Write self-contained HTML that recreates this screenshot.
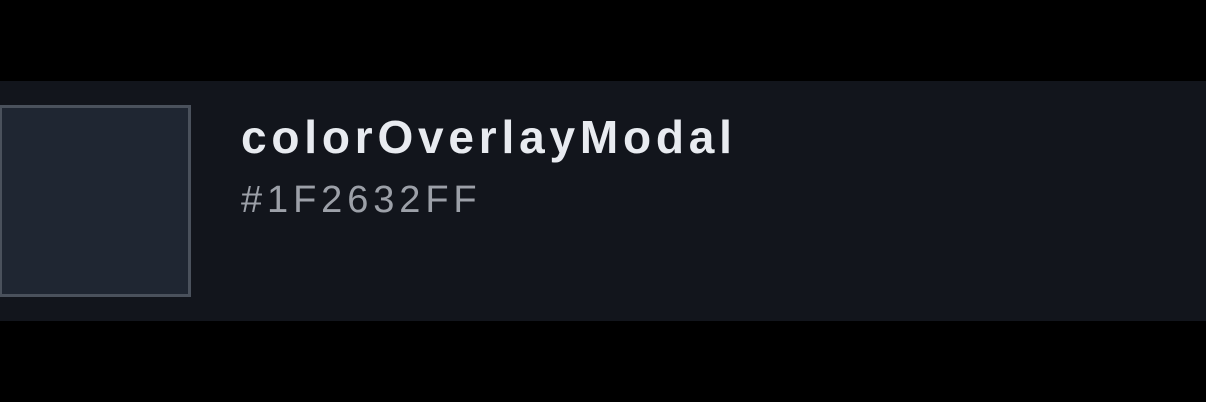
<!DOCTYPE html>
<html><head><style>
html,body{margin:0;padding:0;background:#000;width:1206px;height:402px;overflow:hidden}
.band{position:absolute;left:0;top:81px;width:1206px;height:240px;background:#12151c}
.sw{position:absolute;left:0;top:105px;width:186px;height:186px;background:#1f2632;border:3px solid #4a515c;border-left-width:2px}
.t{position:absolute;left:241px;top:114px;font:bold 46px/1 "Liberation Sans",sans-serif;color:#e8ebf0;white-space:nowrap;letter-spacing:4.8px}
.h{position:absolute;left:241px;top:181px;font:38px/1 "Liberation Sans",sans-serif;color:#9ca0a8;white-space:nowrap;letter-spacing:4.9px}
</style></head><body>
<div class="band"></div>
<div class="sw"></div>
<div class="t">colorOverlayModal</div>
<div class="h">#1F2632FF</div>
</body></html>
